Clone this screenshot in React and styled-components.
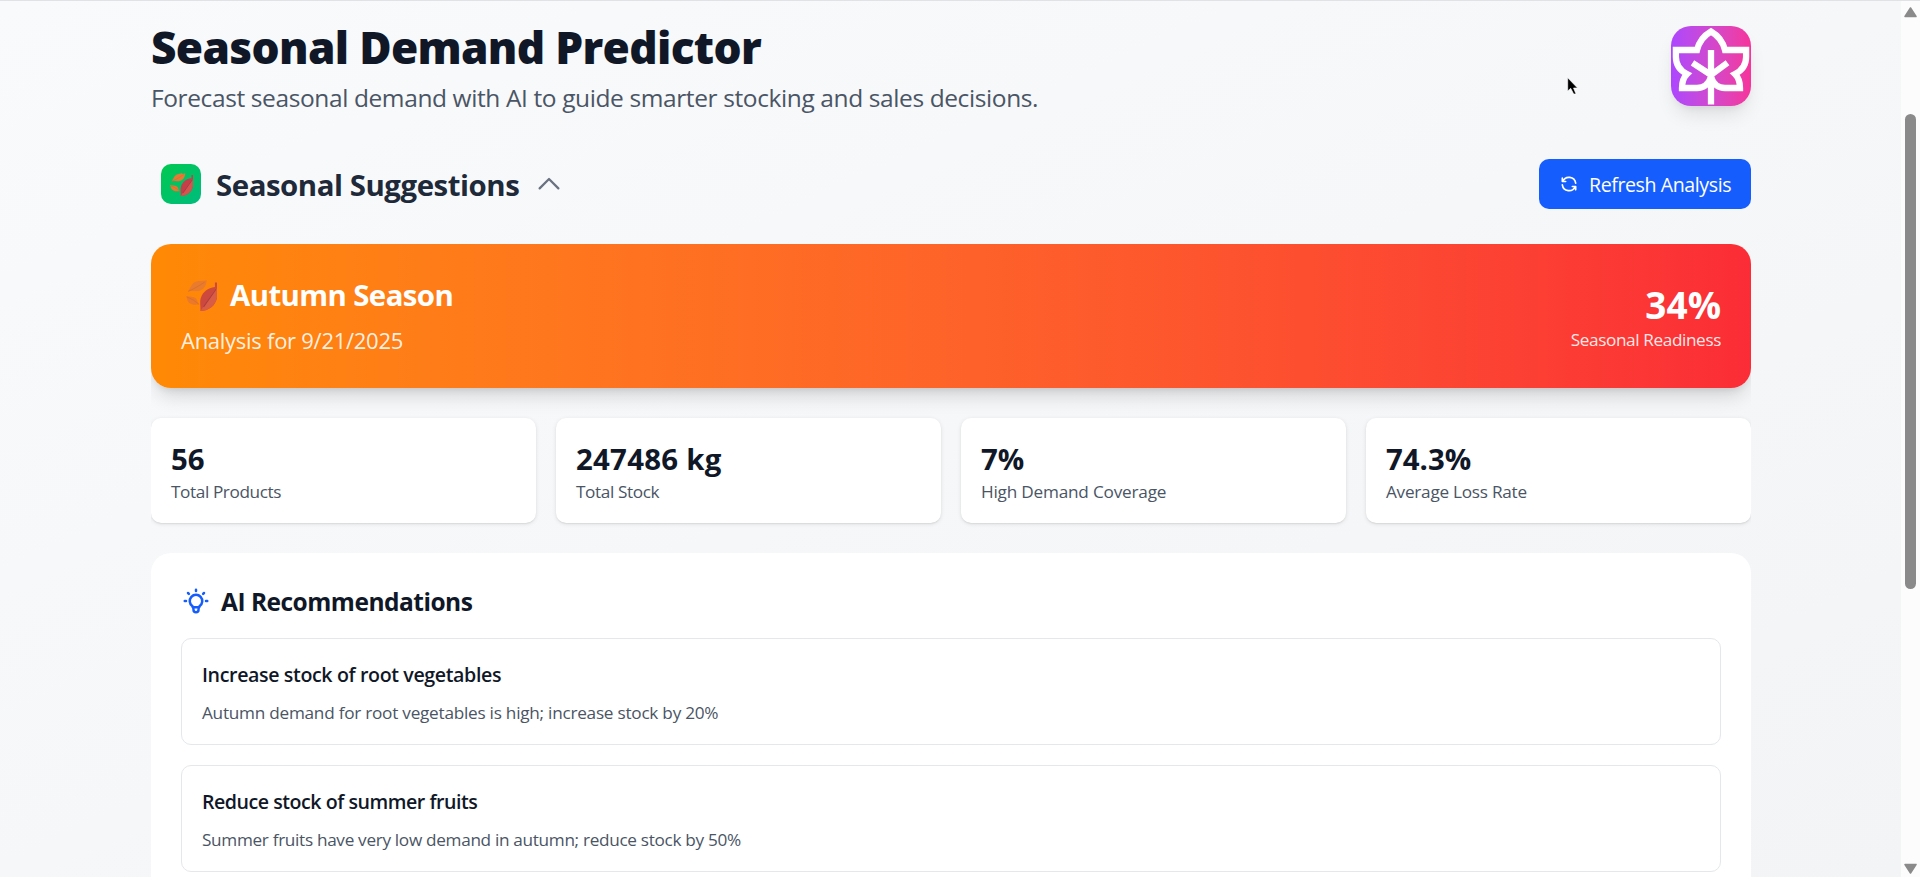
import React from 'react';
import styled, { createGlobalStyle } from 'styled-components';
import { TbBulb, TbRefresh } from 'react-icons/tb';

const GlobalStyle = createGlobalStyle`
  *, *::before, *::after { box-sizing: border-box; }
  body { margin: 0; font-family: "Open Sans", "Noto Sans", sans-serif; overflow: hidden; }
  h1, h2, h3, h4, p { margin: 0; }
`;

const Window = styled.div`
  display: flex;
  height: 877px;
  overflow: hidden;
  position: relative;
`;

const Page = styled.main`
  flex: 1;
  height: 877px;
  overflow: hidden;
  padding: 20px 150px 0 151px;
  border-top: 1px solid #e0e2e6;
  background: linear-gradient(to bottom right, #f9fafc, #f3f4f6);
`;

const Header = styled.header`
  display: flex;
  justify-content: space-between;
  height: 94px;
  margin-bottom: 44px;
`;

const Title = styled.h1`
  padding-top: 1px;
  font-size: 44.2px;
  line-height: 50px;
  font-weight: 800;
  letter-spacing: -0.68px;
  color: #101828;
  white-space: nowrap;
`;

const Tagline = styled.p`
  margin-top: 8px;
  font-size: 24.5px;
  line-height: 35px;
  letter-spacing: -0.39px;
  color: #4a5565;
  white-space: nowrap;
`;

const Logo = styled.div`
  width: 80px;
  height: 80px;
  margin-top: 5px;
  border-radius: 20px;
  background: linear-gradient(to right in oklab, #ad46ff, #f6339a);
  box-shadow: 0 12px 19px -4px rgba(0, 0, 0, 0.1), 0 5px 8px -5px rgba(0, 0, 0, 0.1);
  svg { display: block; }
`;

const SectionBar = styled.div`
  display: flex;
  align-items: center;
  justify-content: space-between;
  height: 50px;
  margin-bottom: 35px;
  padding-left: 10px;
`;

const SectionHeading = styled.div`
  display: flex;
  align-items: center;
  gap: 15px;
  svg { display: block; }
`;

const SectionIcon = styled.div`
  display: flex;
  align-items: center;
  justify-content: center;
  width: 40px;
  height: 40px;
  border-radius: 10px;
  background: linear-gradient(to bottom right, #00c950, #00bc7d);
`;

const SectionTitle = styled.h2`
  padding-top: 1px;
  font-size: 29.4px;
  line-height: 40px;
  font-weight: 700;
  letter-spacing: -0.45px;
  color: #1e2939;
  white-space: nowrap;
`;

const RefreshButton = styled.button`
  display: flex;
  align-items: center;
  gap: 10px;
  width: 212px;
  height: 50px;
  padding: 0 20px;
  border: 0;
  border-radius: 10px;
  background: #155dfc;
  color: #fff;
  font: 400 19.6px/30px "Open Sans", "Noto Sans", sans-serif;
  letter-spacing: -0.42px;
  white-space: nowrap;
  svg { flex: none; }
  span { padding-top: 2px; }
`;

const Results = styled.section`
  overflow: hidden;
  height: 640px;
`;

const Banner = styled.div`
  display: flex;
  justify-content: space-between;
  height: 144px;
  padding: 31px 30px 0;
  border-radius: 20px;
  background: linear-gradient(to right in oklab, #ff8904, #fb2c36);
  box-shadow: 0 12px 19px -4px rgba(0, 0, 0, 0.14), 0 5px 8px -5px rgba(0, 0, 0, 0.14);
  color: #fff;
`;

const SeasonTitle = styled.h3`
  display: flex;
  gap: 13px;
  padding-left: 5px;
  font-size: 29.4px;
  line-height: 40px;
  font-weight: 700;
  letter-spacing: -0.6px;
  white-space: nowrap;
  svg { display: block; margin-top: 5px; opacity: 0.85; }
`;

const SeasonDate = styled.p`
  margin-top: 8px;
  font-size: 22px;
  line-height: 35px;
  letter-spacing: -0.27px;
  color: rgba(255, 255, 255, 0.9);
  white-space: nowrap;
`;

const Readiness = styled.div`
  padding-top: 5px;
  text-align: right;
`;

const ReadinessValue = styled.div`
  font-size: 37px;
  line-height: 50px;
  font-weight: 700;
`;

const ReadinessLabel = styled.div`
  font-size: 17.2px;
  line-height: 20px;
  letter-spacing: -0.39px;
  color: rgba(255, 255, 255, 0.9);
  white-space: nowrap;
`;

const StatGrid = styled.div`
  display: grid;
  grid-template-columns: repeat(4, 1fr);
  gap: 20px;
  margin: 30px 0;
`;

const StatCard = styled.div`
  height: 105px;
  padding: 21px 20px 20px;
  border-radius: 10px;
  background: #fff;
  box-shadow: 0 1px 4px rgba(0, 0, 0, 0.1), 0 1px 2px -1px rgba(0, 0, 0, 0.2);
`;

const StatValue = styled.div`
  font-size: 29.4px;
  line-height: 40px;
  font-weight: 700;
  letter-spacing: ${(p) => p.$tracking}px;
  color: #101828;
  white-space: nowrap;
`;

const StatLabel = styled.div`
  padding-top: 1px;
  font-size: 17.2px;
  line-height: 24px;
  letter-spacing: ${(p) => p.$tracking}px;
  color: #4a5565;
  white-space: nowrap;
`;

const Panel = styled.div`
  padding: 30px;
  border-radius: 20px;
  background: #fff;
  height: 420px;
`;

const PanelTitle = styled.h3`
  display: flex;
  align-items: center;
  gap: 10px;
  height: 35px;
  margin-bottom: 20px;
  font-size: 24.5px;
  line-height: 35px;
  font-weight: 700;
  letter-spacing: -0.5px;
  color: #101828;
  white-space: nowrap;
  svg { color: #155dfc; }
  span { padding-top: 2px; }
`;

const Recommendation = styled.article`
  height: 107px;
  margin-bottom: 20px;
  padding: 21px 20px 20px;
  border: 1px solid #e5e7eb;
  border-radius: 10px;
`;

const RecTitle = styled.h4`
  font-size: 19.6px;
  line-height: 30px;
  font-weight: 600;
  letter-spacing: ${(p) => p.$tracking}px;
  color: #101828;
`;

const RecText = styled.p`
  margin-top: 10px;
  font-size: 17.2px;
  line-height: 25px;
  letter-spacing: ${(p) => p.$tracking}px;
  color: #4a5565;
`;

const Scrollbar = styled.div`
  display: flex;
  flex-direction: column;
  align-items: center;
  width: 19px;
  padding: 6px 0 3px;
  background: #fcfcfc;
  border-top: 1px solid #e0e2e6;
`;

const Track = styled.div`
  flex: 1;
  padding-top: 96px;
`;

const Thumb = styled.div`
  width: 11px;
  height: 475px;
  border-radius: 6px;
  background: #8a8a8a;
`;

const Cursor = styled.svg`
  position: absolute;
  left: 1567px;
  top: 77px;
`;

const Leaves = ({ size }) => (
  <svg width={size} height={size} viewBox="0 0 30 30">
    <path d="M2 11C4 9.500 4.500 3 10 1.500C13 .4 17 1.500 20 .3C19.500 5 18 9 13 10.300C9 11.300 6 10 2 11Z" fill="#e47a35" />
    <path d="M2 11C7 9 12 6 18 2" stroke="#cf6a30" strokeWidth=".7" fill="none" />
    <path d="M0 15.500C3 16.500 6 15.500 9 17.500C11.500 19 10.500 22 12.800 23.500C9 24 6 24.500 3 22C.8 20 1.300 17.500 0 15.500Z" fill="#e8772f" />
    <path d="M1 16.500C5 18 9 20.500 12.300 23.300" stroke="#cf6a30" strokeWidth=".7" fill="none" />
    <path d="M14 30C14.300 25 13 21 14.500 17C16.500 11.500 21 7.500 28 6.800V2.500H30V17C28.500 25 22 30 14 30Z" fill="#c53f48" />
    <path d="M14 30C22 30 28.500 25 30 17V8.500L28.500 8.500Z" fill="#d35550" />
    <path d="M17 26L29 9" stroke="#a02f48" strokeWidth="1" />
  </svg>
);

const MapleLeaf = () => (
  <svg width="80" height="80" viewBox="0 0 80 80" fill="none" stroke="#fff" strokeWidth="6.3">
    <path d="M40 5.500C33 9.500 28 16 26 24H4.900V31C4.900 39 9 44.500 16 48C12 52 11 56 11 62H26C33.500 62 38 57 40 51C42 57 46.500 62 54 62H69C69 56 68 52 64 48C71 44.500 75.100 39 75.100 31V24H54C52 16 47 9.500 40 5.500Z" />
    <path d="M40 24V78.500M21.500 36.800L40 49L56.500 36.800" />
  </svg>
);

const stats = [
  { value: '56', label: 'Total Products', valueTracking: 0, labelTracking: -0.4 },
  { value: '247486 kg', label: 'Total Stock', valueTracking: 0.25, labelTracking: -0.38 },
  { value: '7%', label: 'High Demand Coverage', valueTracking: 0, labelTracking: -0.21 },
  { value: '74.3%', label: 'Average Loss Rate', valueTracking: 0, labelTracking: -0.26 },
];

const recommendations = [
  {
    title: 'Increase stock of root vegetables',
    text: 'Autumn demand for root vegetables is high; increase stock by 20%',
    titleTracking: -0.37,
    textTracking: -0.25,
  },
  {
    title: 'Reduce stock of summer fruits',
    text: 'Summer fruits have very low demand in autumn; reduce stock by 50%',
    titleTracking: -0.47,
    textTracking: -0.32,
  },
];

export default function App() {
  return (
    <>
      <GlobalStyle />
      <Window>
        <Page>
          <Header>
            <div>
              <Title>Seasonal Demand Predictor</Title>
              <Tagline>Forecast seasonal demand with AI to guide smarter stocking and sales decisions.</Tagline>
            </div>
            <Logo><MapleLeaf /></Logo>
          </Header>
          <SectionBar>
            <SectionHeading>
              <SectionIcon><Leaves size={23} /></SectionIcon>
              <SectionTitle>Seasonal Suggestions</SectionTitle>
              <svg width="30" height="30" viewBox="0 0 24 24" fill="none" stroke="#6a7282" strokeWidth="1.8" strokeLinecap="round" strokeLinejoin="round">
                <path d="m4.500 15.500 7.500-7.500 7.500 7.500" />
              </svg>
            </SectionHeading>
            <RefreshButton><TbRefresh size={20} /><span>Refresh Analysis</span></RefreshButton>
          </SectionBar>
          <Results>
            <Banner>
              <div>
                <SeasonTitle><Leaves size={31} />Autumn Season</SeasonTitle>
                <SeasonDate>Analysis for 9/21/2025</SeasonDate>
              </div>
              <Readiness>
                <ReadinessValue>34%</ReadinessValue>
                <ReadinessLabel>Seasonal Readiness</ReadinessLabel>
              </Readiness>
            </Banner>
            <StatGrid>
              {stats.map((s) => (
                <StatCard key={s.label}>
                  <StatValue $tracking={s.valueTracking}>{s.value}</StatValue>
                  <StatLabel $tracking={s.labelTracking}>{s.label}</StatLabel>
                </StatCard>
              ))}
            </StatGrid>
            <Panel>
              <PanelTitle><TbBulb size={30} /><span>AI Recommendations</span></PanelTitle>
              {recommendations.map((r) => (
                <Recommendation key={r.title}>
                  <RecTitle $tracking={r.titleTracking}>{r.title}</RecTitle>
                  <RecText $tracking={r.textTracking}>{r.text}</RecText>
                </Recommendation>
              ))}
            </Panel>
          </Results>
        </Page>
        <Scrollbar>
          <svg width="13" height="11" viewBox="0 0 13 11"><path d="M6.500 1L12 9.500H1Z" fill="#8a8a8a" stroke="#8a8a8a" strokeWidth="1.500" strokeLinejoin="round" /></svg>
          <Track><Thumb /></Track>
          <svg width="13" height="11" viewBox="0 0 13 11"><path d="M6.500 10L12 1.500H1Z" fill="#8a8a8a" stroke="#8a8a8a" strokeWidth="1.500" strokeLinejoin="round" /></svg>
        </Scrollbar>
        <Cursor width="12" height="20" viewBox="0 0 12 20">
          <path d="M.7 .8V14L3.700 11.300L6.700 17H9L6.500 11H10.500Z" fill="#000" stroke="#fff" strokeWidth=".6" />
        </Cursor>
      </Window>
    </>
  );
}
